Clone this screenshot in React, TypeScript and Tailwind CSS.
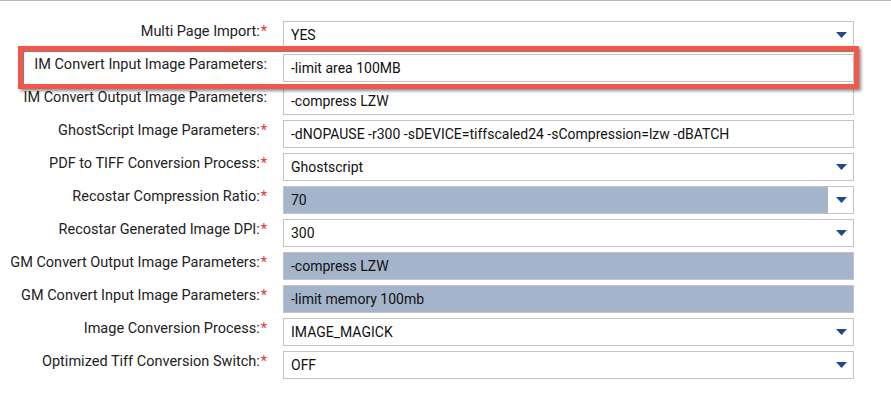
import React from "react";

type Field = {
  label: string;
  value: string;
  required?: boolean;
  select?: boolean;
  disabled?: boolean;
};

const fields: Field[] = [
  { label: "Multi Page Import:", value: "YES", required: true, select: true },
  { label: "IM Convert Input Image Parameters:", value: "-limit area 100MB" },
  { label: "IM Convert Output Image Parameters:", value: "-compress LZW" },
  {
    label: "GhostScript Image Parameters:",
    value: "-dNOPAUSE -r300 -sDEVICE=tiffscaled24 -sCompression=lzw -dBATCH",
    required: true,
  },
  { label: "PDF to TIFF Conversion Process:", value: "Ghostscript", required: true, select: true },
  { label: "Recostar Compression Ratio:", value: "70", required: true, select: true, disabled: true },
  { label: "Recostar Generated Image DPI:", value: "300", required: true, select: true },
  { label: "GM Convert Output Image Parameters:", value: "-compress LZW", required: true, disabled: true },
  { label: "GM Convert Input Image Parameters:", value: "-limit memory 100mb", required: true, disabled: true },
  { label: "Image Conversion Process:", value: "IMAGE_MAGICK", required: true, select: true },
  { label: "Optimized Tiff Conversion Switch:", value: "OFF", required: true, select: true },
];

function Caret() {
  return (
    <svg width="11" height="6" viewBox="0 0 11 6" className="block">
      <path d="M0 0H11L5.5 6Z" fill="#1f4a86" />
    </svg>
  );
}

function Row({ f }: { f: Field }) {
  return (
    <div className="flex h-[28px] mb-[5px]">
      <div className="w-[267px] shrink-0 pt-[1px] text-right text-[14.5px] leading-[20px] text-[#222]">
        {f.label}
        {f.required && <span className="text-[#e8312a] ml-[1px]">*</span>}
      </div>
      <div
        className={`ml-[16px] w-[571px] h-[28px] flex border border-[#c3c3c3] ${
          f.disabled ? "bg-[#a3b4cb]" : "bg-white"
        }`}
      >
        <div className="flex-1 flex items-center pl-[7px] text-[14px] text-[#111] whitespace-nowrap overflow-hidden">
          {f.value}
        </div>
        {f.select && (
          <div className="w-[25px] shrink-0 bg-white flex items-center justify-center pl-[1px]">
            <Caret />
          </div>
        )}
      </div>
    </div>
  );
}

export default function App() {
  return (
    <div
      className="relative w-[891px] h-[393px] bg-white overflow-hidden border-t border-[#b3b8c9]"
      style={{ fontFamily: "Roboto, 'Liberation Sans', sans-serif" }}
    >
      <div className="pt-[20px]">
        {fields.map((f) => (
          <Row key={f.label} f={f} />
        ))}
      </div>

      {/* highlight overlay */}
      <div className="absolute left-[18px] top-[45px] w-[841px] h-[43px] border-[5px] border-[#f3574b] shadow-[inset_1px_1px_1px_rgba(0,0,0,0.55),2px_2px_3px_rgba(0,0,0,0.45)] pointer-events-none" />
    </div>
  );
}
